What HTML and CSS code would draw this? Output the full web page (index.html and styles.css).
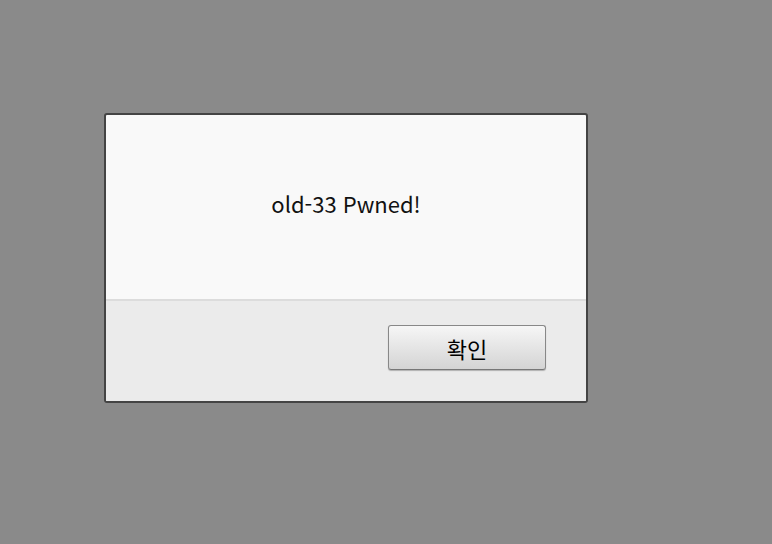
FILE: index.html
```html
<!DOCTYPE html>
<html lang="ko">
<head>
    <meta charset="UTF-8">
    <title>Alert</title>
    <link rel="stylesheet" href="styles.css">
</head>
<body class="page">
    <div class="dialog">
        <div class="dialog-message">old-33 Pwned!</div>
        <div class="dialog-footer">
            <button class="ok-button">확인</button>
        </div>
    </div>
</body>
</html>
```

FILE: styles.css
```css
.page {
    margin: 0;
    height: 544px;
    background-color: #8a8a8a;
    font-family: "Noto Sans CJK KR", "Noto Sans", sans-serif;
}

.dialog {
    position: relative;
    top: 113px;
    left: 104px;
    width: 480px;
    border: 2px solid #444;
    border-radius: 3px;
    background: #f9f9f9;
    overflow: hidden;
}

.dialog-message {
    height: 184px;
    padding-bottom: 9px;
    box-sizing: border-box;
    display: flex;
    align-items: center;
    justify-content: center;
    font-size: 22px;
    color: #111;
}

.dialog-footer {
    height: 102px;
    border-top: 2px solid #dcdcdc;
    background-color: #ebebeb;
    display: flex;
    justify-content: flex-end;
    align-items: flex-start;
    padding: 24px 40px 0 0;
    box-sizing: border-box;
}

.ok-button {
    width: 158px;
    height: 45px;
    border: 1px solid #888;
    border-bottom-color: #777;
    border-radius: 3px;
    background: linear-gradient(#f6f6f6, #d4d4d4);
    font-family: "Noto Sans CJK KR", sans-serif;
    font-size: 22px;
    color: #000;
    box-shadow: 0 1px 1px rgba(0, 0, 0, 0.25);
}
```
